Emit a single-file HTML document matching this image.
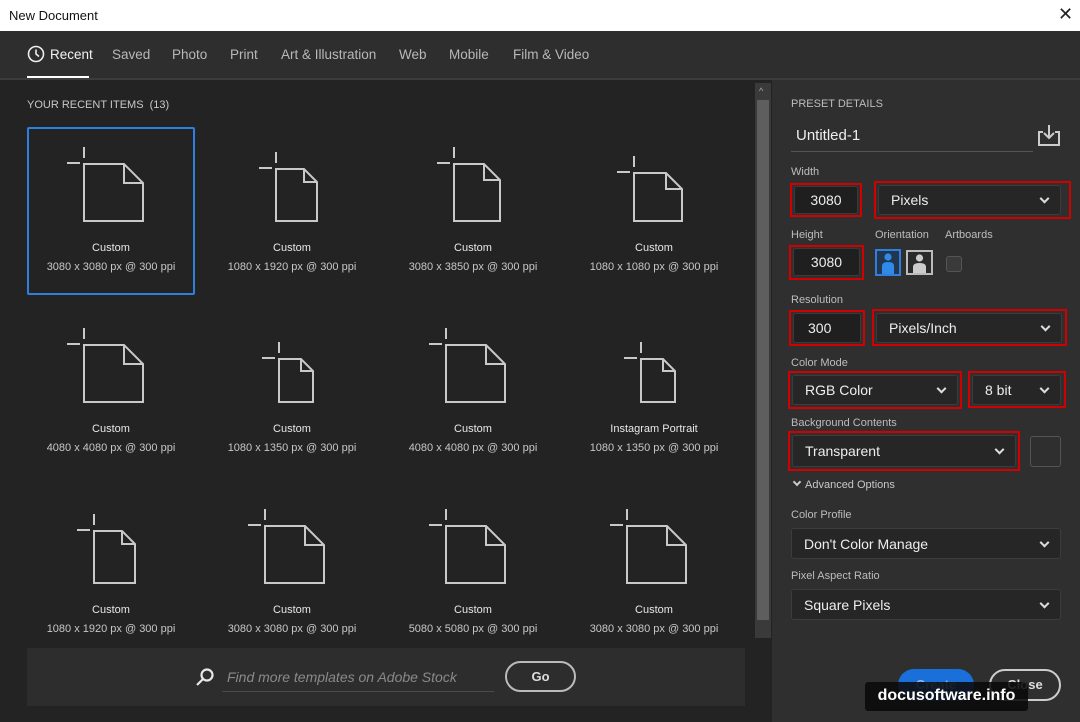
<!DOCTYPE html>
<html><head><meta charset="utf-8"><style>
*{margin:0;padding:0;box-sizing:border-box}
body{width:1080px;height:722px;overflow:hidden;background:#232323;font-family:"Liberation Sans",sans-serif;position:relative;color:#ddd}
.a{position:absolute;white-space:nowrap}
.lab{font-size:11px;color:#bdbdbd}
.cap{font-size:11px;color:#c8c8c8;text-align:center;width:180px}
.nm{font-size:11px;color:#e8e8e8;text-align:center;width:180px}
.tab{font-size:13.5px;color:#b8b8b8;top:47px}
.red{position:absolute;border:2px solid #d20000}
.fld{position:absolute;background:#1f1f1f;border:1px solid #3a3a3a;border-radius:3px;font-size:14px;color:#eee}
.dd{position:absolute;background:#262626;border:1px solid #3c3c3c;border-radius:3px;font-size:14px;color:#eee;padding-left:12px;line-height:normal;display:flex;align-items:center}
.chev{position:absolute;right:12px;top:50%;width:7px;height:7px;border-right:2px solid #ddd;border-bottom:2px solid #ddd;transform:translateY(-70%) rotate(45deg)}
</style></head><body>
<div class="a" style="left:0;top:0;width:1080px;height:31px;background:#fff"></div>
<div class="a" style="left:9px;top:8px;font-size:13px;color:#111">New Document</div>
<div class="a" style="left:1058px;top:4px;font-size:18px;color:#222">✕</div>
<div class="a" style="left:0;top:31px;width:1080px;height:47px;background:#2e2e2e"></div>
<div class="a" style="left:0;top:78px;width:1080px;height:2px;background:#3c3c3c"></div>
<svg class="a" style="left:27px;top:45px" width="18" height="18"><circle cx="9" cy="9" r="7.5" fill="none" stroke="#eee" stroke-width="1.6"/><path d="M9 4.5V9l3 2.5" fill="none" stroke="#eee" stroke-width="1.6"/></svg>
<div class="a" style="left:50px;top:47px;font-size:13.5px;color:#f2f2f2">Recent</div>
<div class="a" style="left:27px;top:76px;width:62px;height:2px;background:#fff"></div>
<div class="a tab" style="left:112px">Saved</div>
<div class="a tab" style="left:172px">Photo</div>
<div class="a tab" style="left:230px">Print</div>
<div class="a tab" style="left:281px">Art &amp; Illustration</div>
<div class="a tab" style="left:399px">Web</div>
<div class="a tab" style="left:449px">Mobile</div>
<div class="a tab" style="left:513px">Film &amp; Video</div>

<div class="a" style="left:772px;top:80px;width:308px;height:642px;background:#2f2f2f"></div>
<div class="a" style="left:755px;top:83px;width:16px;height:555px;background:#3a3a3a"></div>
<div class="a" style="left:757px;top:100px;width:12px;height:520px;background:#5e5e5e"></div>
<div class="a" style="left:759px;top:86px;font-size:9px;color:#aaa">^</div>

<div class="a" style="left:27px;top:99px;font-size:11px;color:#c8c8c8">YOUR RECENT ITEMS&nbsp; (13)</div>
<div class="a" style="left:27px;top:127px;width:168px;height:168px;border:2px solid #2d7fe0;border-radius:2px"></div>

<svg class="a" style="left:0;top:0" width="760" height="650" fill="none" stroke="#c9c9c9" stroke-width="2">
<path d="M84 164H124L143 183V221H84Z M124 164V183H143 M84 158V147 M80 163H67"/>
<path d="M276 169H304L317 182V221H276Z M304 169V182H317 M276 163V152 M272 168H259"/>
<path d="M454 164H484L500 180V221H454Z M484 164V180H500 M454 158V147 M450 163H437"/>
<path d="M634 173H666L682 189V221H634Z M666 173V189H682 M634 167V156 M630 172H617"/>
<path d="M84 345H124L143 364V402H84Z M124 345V364H143 M84 339V328 M80 344H67"/>
<path d="M279 359H301L313 371V402H279Z M301 359V371H313 M279 353V342 M275 358H262"/>
<path d="M446 345H486L505 364V402H446Z M486 345V364H505 M446 339V328 M442 344H429"/>
<path d="M641 359H663L675 371V402H641Z M663 359V371H675 M641 353V342 M637 358H624"/>
<path d="M94 531H122L135 544V583H94Z M122 531V544H135 M94 525V514 M90 530H77"/>
<path d="M265 526H305L324 545V583H265Z M305 526V545H324 M265 520V509 M261 525H248"/>
<path d="M446 526H486L505 545V583H446Z M486 526V545H505 M446 520V509 M442 525H429"/>
<path d="M627 526H667L686 545V583H627Z M667 526V545H686 M627 520V509 M623 525H610"/>
</svg>

<div class="a nm" style="left:21px;top:242px">Custom</div><div class="a cap" style="left:21px;top:261px">3080 x 3080 px @ 300 ppi</div>
<div class="a nm" style="left:202px;top:242px">Custom</div><div class="a cap" style="left:202px;top:261px">1080 x 1920 px @ 300 ppi</div>
<div class="a nm" style="left:383px;top:242px">Custom</div><div class="a cap" style="left:383px;top:261px">3080 x 3850 px @ 300 ppi</div>
<div class="a nm" style="left:564px;top:242px">Custom</div><div class="a cap" style="left:564px;top:261px">1080 x 1080 px @ 300 ppi</div>
<div class="a nm" style="left:21px;top:423px">Custom</div><div class="a cap" style="left:21px;top:442px">4080 x 4080 px @ 300 ppi</div>
<div class="a nm" style="left:202px;top:423px">Custom</div><div class="a cap" style="left:202px;top:442px">1080 x 1350 px @ 300 ppi</div>
<div class="a nm" style="left:383px;top:423px">Custom</div><div class="a cap" style="left:383px;top:442px">4080 x 4080 px @ 300 ppi</div>
<div class="a nm" style="left:564px;top:423px">Instagram Portrait</div><div class="a cap" style="left:564px;top:442px">1080 x 1350 px @ 300 ppi</div>
<div class="a nm" style="left:21px;top:604px">Custom</div><div class="a cap" style="left:21px;top:623px">1080 x 1920 px @ 300 ppi</div>
<div class="a nm" style="left:202px;top:604px">Custom</div><div class="a cap" style="left:202px;top:623px">3080 x 3080 px @ 300 ppi</div>
<div class="a nm" style="left:383px;top:604px">Custom</div><div class="a cap" style="left:383px;top:623px">5080 x 5080 px @ 300 ppi</div>
<div class="a nm" style="left:564px;top:604px">Custom</div><div class="a cap" style="left:564px;top:623px">3080 x 3080 px @ 300 ppi</div>

<div class="a" style="left:27px;top:648px;width:718px;height:58px;background:#2d2d2d"></div>
<svg class="a" style="left:195px;top:667px" width="20" height="20" fill="none" stroke="#e8e8e8" stroke-width="2.2"><circle cx="12" cy="8" r="5.5"/><path d="M8 12L2 18"/></svg>
<div class="a" style="left:227px;top:669px;font-size:14px;font-style:italic;color:#8a8a8a">Find more templates on Adobe Stock</div>
<div class="a" style="left:222px;top:691px;width:272px;height:1px;background:#4a4a4a"></div>
<div class="a" style="left:505px;top:661px;width:71px;height:31px;border:2px solid #bbb;border-radius:16px;font-size:13px;font-weight:bold;color:#ddd;text-align:center;line-height:27px">Go</div>

<div class="a lab" style="left:791px;top:98px">PRESET DETAILS</div>
<div class="a" style="left:796px;top:127px;font-size:15px;color:#eee">Untitled-1</div>
<div class="a" style="left:791px;top:151px;width:242px;height:1px;background:#555"></div>
<svg class="a" style="left:1037px;top:124px" width="24" height="23" fill="none" stroke="#ccc" stroke-width="2"><path d="M6 8H2V21H22V8H18"/><path d="M12 1V13M7 9L12 14L17 9"/></svg>

<div class="a lab" style="left:791px;top:166px">Width</div>
<div class="fld" style="left:794px;top:186px;width:64px;height:28px;text-align:center;line-height:26px">3080</div>
<div class="red" style="left:790px;top:183px;width:72px;height:34px"></div>
<div class="dd" style="left:878px;top:185px;width:183px;height:30px">Pixels<span class="chev"></span></div>
<div class="red" style="left:874px;top:181px;width:197px;height:38px"></div>

<div class="a lab" style="left:791px;top:229px">Height</div>
<div class="fld" style="left:793px;top:248px;width:67px;height:28px;text-align:center;line-height:26px">3080</div>
<div class="red" style="left:789px;top:245px;width:75px;height:35px"></div>
<div class="a lab" style="left:875px;top:229px">Orientation</div>
<div class="a lab" style="left:945px;top:229px">Artboards</div>
<svg class="a" style="left:875px;top:249px" width="60" height="28"><rect x="1" y="1" width="24" height="25" fill="#233650" stroke="#2f7fe0" stroke-width="2"/><circle cx="13" cy="8" r="3.6" fill="#2f8ae8"/><path d="M7 25V17Q7 13 13 13Q19 13 19 17V25Z" fill="#2f8ae8"/><rect x="32" y="2" width="25" height="23" fill="#2a2a2a" stroke="#bbb" stroke-width="2"/><circle cx="44.5" cy="9" r="3.6" fill="#ccc"/><path d="M38 24V18Q38 14 44.5 14Q51 14 51 18V24Z" fill="#ccc"/></svg>
<div class="a" style="left:946px;top:256px;width:16px;height:16px;border:1px solid #555;background:#3a3a3a;border-radius:3px"></div>

<div class="a lab" style="left:791px;top:294px">Resolution</div>
<div class="fld" style="left:793px;top:313px;width:68px;height:30px;padding-left:14px;line-height:28px">300</div>
<div class="red" style="left:789px;top:310px;width:76px;height:36px"></div>
<div class="dd" style="left:876px;top:313px;width:186px;height:30px">Pixels/Inch<span class="chev"></span></div>
<div class="red" style="left:872px;top:309px;width:195px;height:37px"></div>

<div class="a lab" style="left:791px;top:357px">Color Mode</div>
<div class="dd" style="left:792px;top:375px;width:166px;height:30px">RGB Color<span class="chev"></span></div>
<div class="red" style="left:788px;top:371px;width:174px;height:38px"></div>
<div class="dd" style="left:972px;top:375px;width:89px;height:30px">8 bit<span class="chev"></span></div>
<div class="red" style="left:968px;top:371px;width:98px;height:37px"></div>

<div class="a lab" style="left:791px;top:417px">Background Contents</div>
<div class="dd" style="left:792px;top:435px;width:224px;height:32px">Transparent<span class="chev"></span></div>
<div class="red" style="left:788px;top:431px;width:232px;height:40px"></div>
<div class="a" style="left:1030px;top:436px;width:31px;height:31px;border:1px solid #555;border-radius:3px"></div>

<div class="a" style="left:793px;top:479px;font-size:11px;color:#c8c8c8"><span style="display:inline-block;width:6px;height:6px;border-right:2px solid #ccc;border-bottom:2px solid #ccc;transform:translateY(-3px) rotate(45deg);margin:0 5px 0 1px"></span>Advanced Options</div>

<div class="a lab" style="left:791px;top:509px">Color Profile</div>
<div class="dd" style="left:791px;top:528px;width:270px;height:31px">Don't Color Manage<span class="chev"></span></div>
<div class="a lab" style="left:791px;top:570px">Pixel Aspect Ratio</div>
<div class="dd" style="left:791px;top:589px;width:270px;height:31px">Square Pixels<span class="chev"></span></div>

<div class="a" style="left:898px;top:669px;width:76px;height:32px;background:#1a6fd8;border-radius:16px;font-size:13px;font-weight:bold;color:#8fb8ea;text-align:center;line-height:32px">Create</div>
<div class="a" style="left:989px;top:669px;width:72px;height:32px;border:2px solid #ccc;border-radius:16px;font-size:13px;font-weight:bold;color:#ddd;text-align:center;line-height:28px">Close</div>
<div class="a" style="left:865px;top:682px;width:163px;height:29px;background:rgba(10,10,10,.88);border-radius:3px;font-size:16px;font-weight:bold;color:#fff;text-align:center;line-height:28px">docusoftware.info</div>
</body></html>
